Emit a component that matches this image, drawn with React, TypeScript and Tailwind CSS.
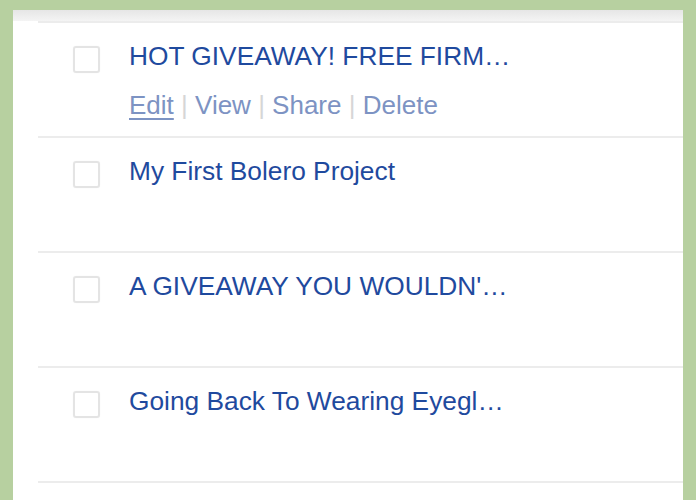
const posts = [
  { title: "HOT GIVEAWAY! FREE FIRM…", actions: true },
  { title: "My First Bolero Project", actions: false },
  { title: "A GIVEAWAY YOU WOULDN'…", actions: false },
  { title: "Going Back To Wearing Eyegl…", actions: false },
];

const App = () => {
  return (
    <div
      className="w-[696px] h-[500px] overflow-hidden bg-[#b7d0a0] pl-[13px] pt-[10px]"
      style={{ fontFamily: '"Liberation Sans", Arial, sans-serif' }}
    >
      <div className="w-[670px] h-[490px] bg-white">
        <div className="h-[11px] bg-gradient-to-b from-[#e6e6e6] to-[#f4f4f4]"></div>
        <div className="ml-[25px]">
          {posts.map((post, index) => (
            <div key={index} className="h-[115px] border-t-2 border-[#ececec] flex pt-[24px]">
              <div className="ml-[35px] w-[27px] h-[27px] -mt-[1px] rounded-[3px] border-2 border-[#e4e4e4] shadow-[0_0_1px_rgba(0,0,0,0.08)] shrink-0"></div>
              <div className="ml-[29px] -mt-[6px]">
                <div className="text-[26.3px] leading-[30px] text-[#1f4a9e]">{post.title}</div>
                {post.actions && (
                  <div className="mt-[19px] text-[26px] leading-[30px] text-[#7d93c3]">
                    <span className="underline underline-offset-[4px] decoration-[1.5px]">Edit</span>
                    <span className="text-[#d6d6d6]"> | </span>
                    <span>View</span>
                    <span className="text-[#d6d6d6]"> | </span>
                    <span>Share</span>
                    <span className="text-[#d6d6d6]"> | </span>
                    <span>Delete</span>
                  </div>
                )}
              </div>
            </div>
          ))}
          <div className="border-t-2 border-[#ececec]"></div>
        </div>
      </div>
    </div>
  );
};

export default App;
